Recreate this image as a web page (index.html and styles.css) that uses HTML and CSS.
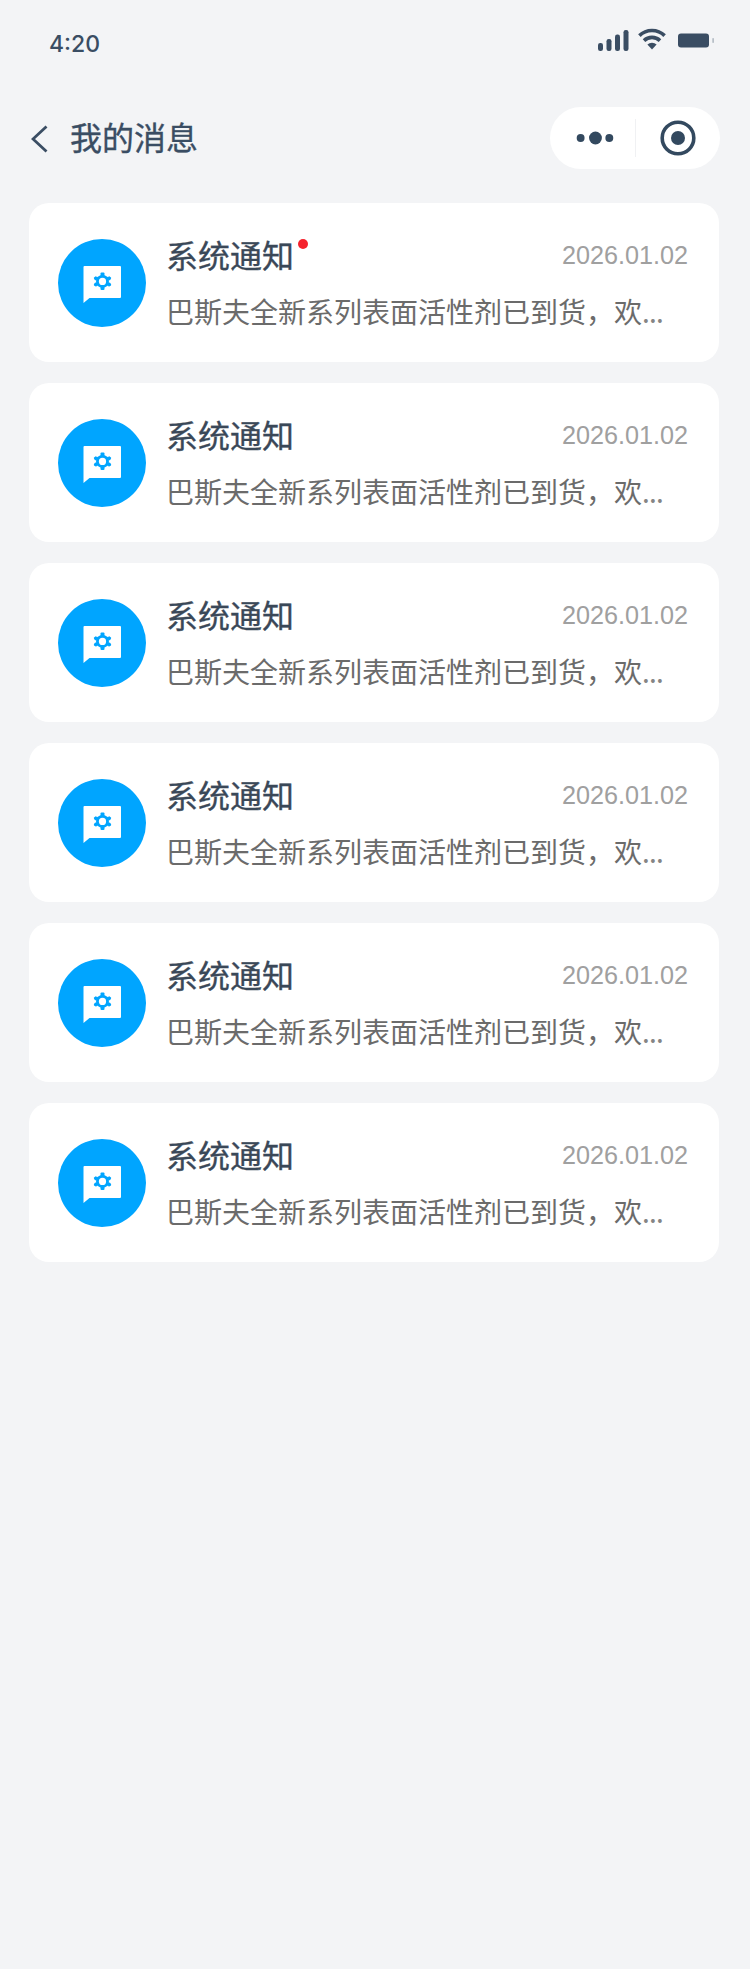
FILE: index.html
```html
<!DOCTYPE html>
<html lang="zh">
<head>
<meta charset="utf-8">
<title>我的消息</title>
<link rel="stylesheet" href="styles.css">
</head>
<body>
<div class="status">
  <span class="time">4:20</span>
  <div class="status-icons">
    <svg class="i-signal" width="31" height="21" viewBox="0 0 31 21"><g fill="#3a4d63"><rect x="0" y="13" width="5" height="8" rx="2.2"/><rect x="8.500" y="9" width="5" height="12" rx="2.2"/><rect x="17" y="4.500" width="5" height="16.500" rx="2.2"/><rect x="25.500" y="0" width="5" height="21" rx="2.2"/></g></svg>
    <svg class="i-wifi" width="28" height="22" viewBox="0 0 28 22"><g fill="none" stroke="#3a4d63" stroke-width="3.6"><path d="M1.4 7.6a18 18 0 0 1 25.2 0"/><path d="M6 12.6a11.5 11.5 0 0 1 16 0"/></g><path d="M9.400 16.600a6.600 6.600 0 0 1 9.200 0L14 21.600z" fill="#3a4d63"/></svg>
    <svg class="i-batt" width="36" height="15" viewBox="0 0 36 15"><rect x="0" y="0.500" width="31" height="14" rx="3" fill="#3a4d63"/><rect x="34.400" y="5" width="1.400" height="5" rx=".7" fill="#a9b2bc"/></svg>
  </div>
</div>
<header class="nav">
  <svg class="back" width="17" height="28" viewBox="0 0 17 28"><path d="M15.500 1.500 2 14l13.500 12.500" fill="none" stroke="#3a4d63" stroke-width="2.800"/></svg>
  <h1 class="nav-title">我的消息</h1>
  <div class="capsule">
    <svg class="cap-more" width="86" height="14" viewBox="0 0 86 14"><g fill="#33495f"><circle cx="31" cy="7" r="4"/><circle cx="46" cy="7" r="6.500"/><circle cx="60" cy="7" r="4"/></g></svg>
    <span class="cap-sep"></span>
    <svg class="cap-target" width="36" height="36" viewBox="0 0 36 36"><circle cx="18" cy="18" r="15.800" fill="none" stroke="#33495f" stroke-width="3.600"/><circle cx="18" cy="18" r="7" fill="#33495f"/></svg>
  </div>
</header>
<main class="list">
  <article class="card">
    <span class="avatar"><svg width="88" height="88" viewBox="0 0 88 88"><use href="#bubble"/></svg></span>
    <div class="body">
      <div class="row"><span class="title unread">系统通知</span><span class="date">2026.01.02</span></div>
      <p class="desc">巴斯夫全新系列表面活性剂已到货，欢<span class="dots">...</span></p>
    </div>
  </article>
  <article class="card">
    <span class="avatar"><svg width="88" height="88" viewBox="0 0 88 88"><use href="#bubble"/></svg></span>
    <div class="body">
      <div class="row"><span class="title">系统通知</span><span class="date">2026.01.02</span></div>
      <p class="desc">巴斯夫全新系列表面活性剂已到货，欢<span class="dots">...</span></p>
    </div>
  </article>
  <article class="card">
    <span class="avatar"><svg width="88" height="88" viewBox="0 0 88 88"><use href="#bubble"/></svg></span>
    <div class="body">
      <div class="row"><span class="title">系统通知</span><span class="date">2026.01.02</span></div>
      <p class="desc">巴斯夫全新系列表面活性剂已到货，欢<span class="dots">...</span></p>
    </div>
  </article>
  <article class="card">
    <span class="avatar"><svg width="88" height="88" viewBox="0 0 88 88"><use href="#bubble"/></svg></span>
    <div class="body">
      <div class="row"><span class="title">系统通知</span><span class="date">2026.01.02</span></div>
      <p class="desc">巴斯夫全新系列表面活性剂已到货，欢<span class="dots">...</span></p>
    </div>
  </article>
  <article class="card">
    <span class="avatar"><svg width="88" height="88" viewBox="0 0 88 88"><use href="#bubble"/></svg></span>
    <div class="body">
      <div class="row"><span class="title">系统通知</span><span class="date">2026.01.02</span></div>
      <p class="desc">巴斯夫全新系列表面活性剂已到货，欢<span class="dots">...</span></p>
    </div>
  </article>
  <article class="card">
    <span class="avatar"><svg width="88" height="88" viewBox="0 0 88 88"><use href="#bubble"/></svg></span>
    <div class="body">
      <div class="row"><span class="title">系统通知</span><span class="date">2026.01.02</span></div>
      <p class="desc">巴斯夫全新系列表面活性剂已到货，欢<span class="dots">...</span></p>
    </div>
  </article>
</main>
<svg class="defs" width="0" height="0" aria-hidden="true">
  <defs>
    <g id="bubble" transform="translate(0.500 1)">
      <path d="M25 27a1 1 0 0 1 1-1h35.500a1 1 0 0 1 1 1v30a1 1 0 0 1-1 1H31l-6 5z" fill="#fff"/>
      <g fill="#00a5ff">
        <path d="M44 34l6.400 3.700v7.400L44 48.800l-6.400-3.700v-7.400z"/>
        <rect x="42" y="32.600" width="4" height="3" rx="1"/>
        <rect x="42" y="47" width="4" height="3" rx="1"/>
        <rect x="35.600" y="36.600" width="3.200" height="3.400" rx="1" transform="rotate(-30 37.200 38.300)"/>
        <rect x="49.200" y="36.600" width="3.200" height="3.400" rx="1" transform="rotate(30 50.800 38.300)"/>
        <rect x="35.600" y="42.800" width="3.200" height="3.400" rx="1" transform="rotate(30 37.200 44.500)"/>
        <rect x="49.200" y="42.800" width="3.200" height="3.400" rx="1" transform="rotate(-30 50.800 44.500)"/>
      </g>
      <circle cx="44" cy="41.400" r="3.600" fill="#fff"/>
    </g>
  </defs>
</svg>
</body>
</html>
```
FILE: styles.css
```css
* { box-sizing: border-box; }
html, body { margin: 0; padding: 0; }
body {
  width: 750px;
  height: 1969px;
  background: #f3f4f6;
  font-family: "Liberation Sans", "Noto Sans CJK SC", sans-serif;
  overflow: hidden;
}
.status {
  height: 89px;
  padding: 0 36px 0 49px;
  display: flex;
  justify-content: space-between;
  align-items: flex-start;
}
.time {
  margin-top: 28px;
  font: 500 23px/32px Inter, sans-serif;
  color: #3a4d63;
}
.status-icons {
  margin-top: 28px;
  display: flex;
  align-items: flex-start;
}
.i-signal { margin-top: 2px; }
.i-wifi { margin-left: 9px; }
.i-batt { margin-left: 12px; margin-top: 5px; }
.nav {
  height: 114px;
  padding: 18px 30px 0 31px;
  display: flex;
  align-items: flex-start;
}
.back { margin-top: 18px; }
.nav-title {
  margin: -2px 0 0 22px;
  font: 400 32px/62px "Noto Sans CJK SC", sans-serif;
  -webkit-text-stroke: 0.35px #3a4d63;
  color: #3a4d63;
}
.capsule {
  margin-left: auto;
  width: 170px;
  height: 62px;
  background: #fff;
  border-radius: 31px;
  display: flex;
  align-items: center;
}
.cap-more { margin-top: 0; flex: none; width: 85px; }
.cap-sep { width: 1px; height: 38px; background: #f0f1f3; }
.cap-target { margin-left: 24px; margin-top: -1px; }
.list {
  padding: 0 31px 0 29px;
  display: flex;
  flex-direction: column;
  gap: 21px;
}
.card {
  height: 159px;
  padding: 36px 31px 0 29px;
  background: #fff;
  border-radius: 20px;
  display: flex;
  align-items: flex-start;
}
.avatar {
  width: 88px;
  height: 88px;
  border-radius: 50%;
  background: #00a5ff;
  flex: none;
}
.avatar svg { display: block; }
.body { flex: 1; margin-left: 20px; margin-top: -6px; min-width: 0; }
.row {
  height: 44px;
  display: flex;
  justify-content: space-between;
  align-items: center;
}
.title {
  position: relative;
  margin-top: -3px;
  font: 400 32px/44px "Noto Sans CJK SC", sans-serif;
  -webkit-text-stroke: 0.35px #3a4858;
  color: #3a4858;
}
.title.unread::after {
  content: "";
  position: absolute;
  left: 132px;
  top: 7px;
  width: 10px;
  height: 10px;
  border-radius: 50%;
  background: #f5222d;
}
.date {
  font-size: 25.2px;
  line-height: 44px;
  color: #a0a0a0;
}
.desc {
  margin: 14px 0 0;
  font: 400 28px/40px "Noto Sans CJK SC", sans-serif;
  color: #6b6b6b;
  white-space: nowrap;
}
.dots { letter-spacing: -0.8px; color: #858585; }
.defs { position: absolute; }
```
